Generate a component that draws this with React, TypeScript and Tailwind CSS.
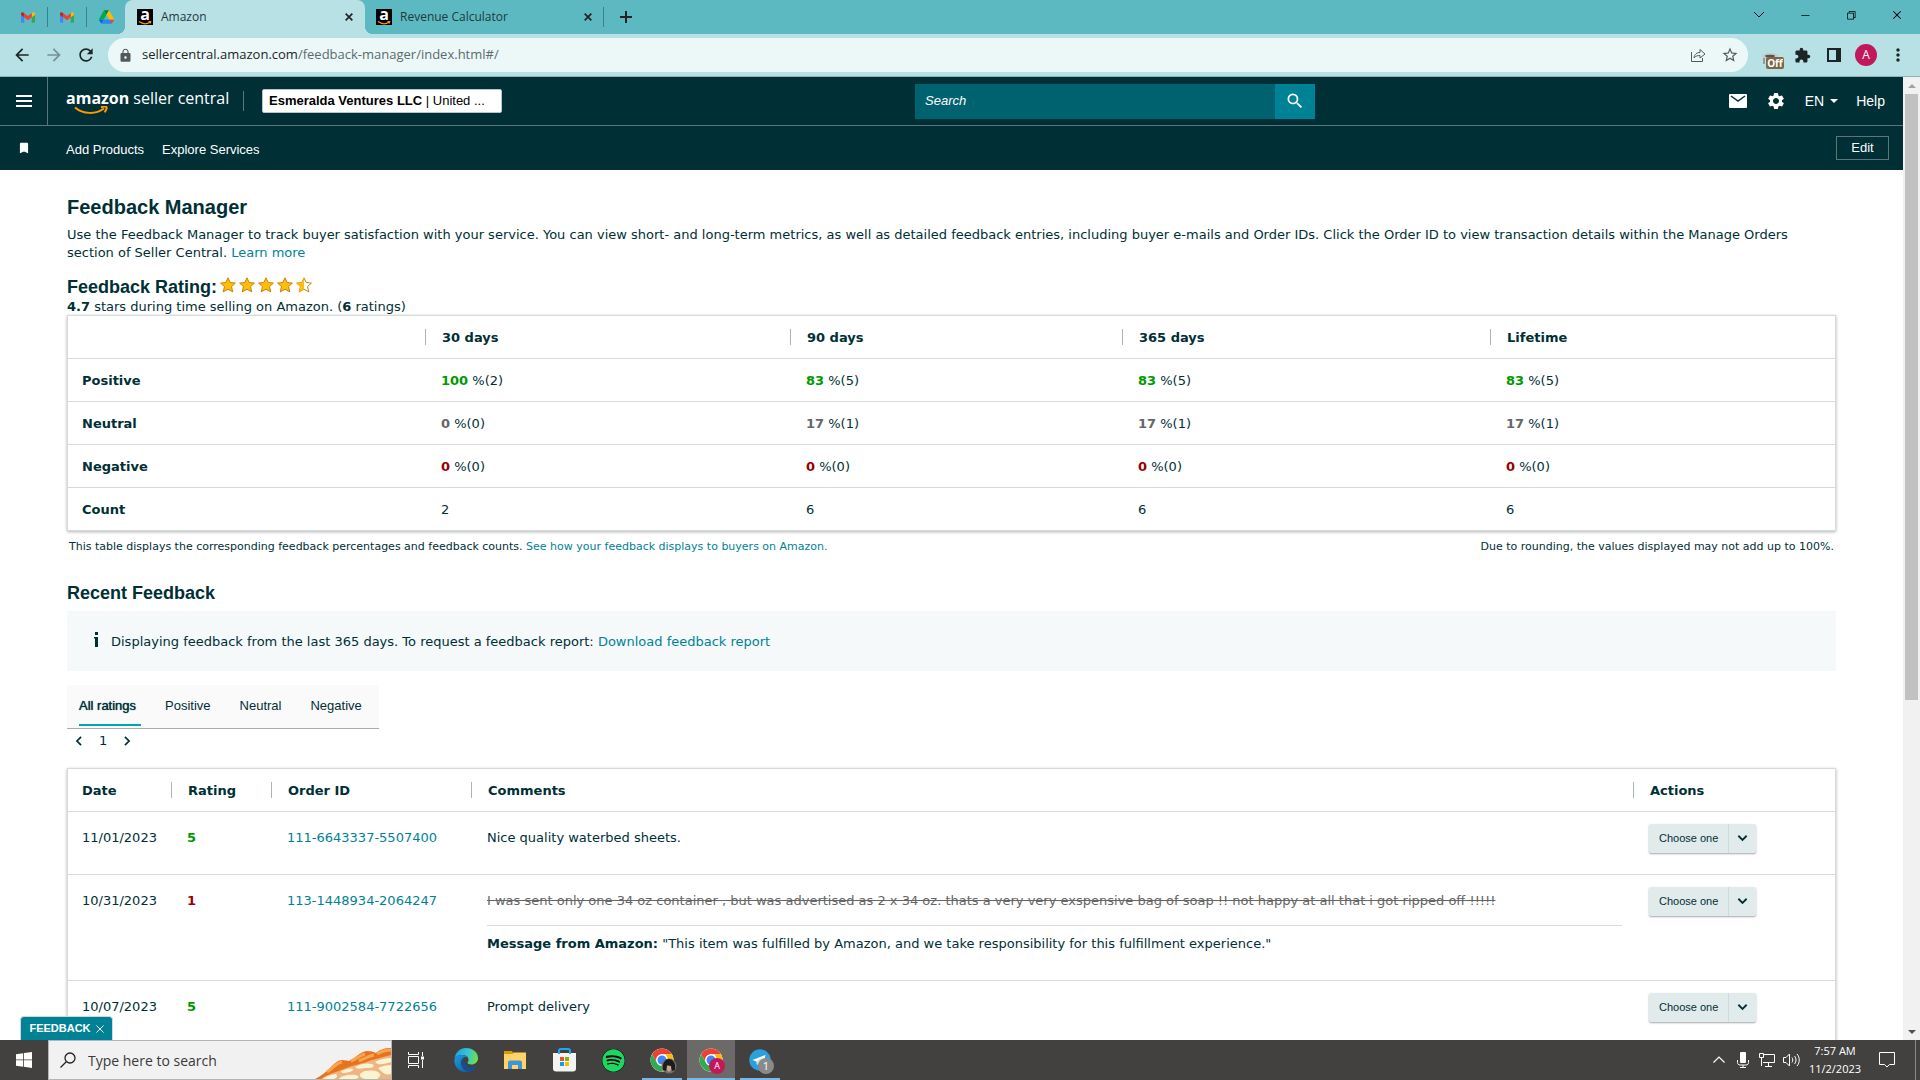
import type { ReactNode } from 'react';
import { FaSpotify } from 'react-icons/fa';
import {
  MdArrowBack,
  MdArrowForward,
  MdBookmark,
  MdExtension,
  MdLock,
  MdMoreVert,
  MdRefresh,
  MdSearch,
  MdSettings,
  MdStarBorder,
} from 'react-icons/md';
import { VscChromeClose, VscChromeMinimize, VscChromeRestore } from 'react-icons/vsc';

const UI_FONT = "font-['Open_Sans','Noto_Sans',sans-serif]";
const ARIAL = "font-['Liberation_Sans',Arial,sans-serif]";
const VERDANA = "font-['DejaVu_Sans',Verdana,sans-serif]";

interface Score {
  percent: number;
  count: number;
}

const periods = ['30 days', '90 days', '365 days', 'Lifetime'];

const summary: { label: string; color: string; scores: Score[] }[] = [
  {
    label: 'Positive',
    color: 'text-[#009900]',
    scores: [
      { percent: 100, count: 2 },
      { percent: 83, count: 5 },
      { percent: 83, count: 5 },
      { percent: 83, count: 5 },
    ],
  },
  {
    label: 'Neutral',
    color: 'text-[#666666]',
    scores: [
      { percent: 0, count: 0 },
      { percent: 17, count: 1 },
      { percent: 17, count: 1 },
      { percent: 17, count: 1 },
    ],
  },
  {
    label: 'Negative',
    color: 'text-[#990000]',
    scores: [
      { percent: 0, count: 0 },
      { percent: 0, count: 0 },
      { percent: 0, count: 0 },
      { percent: 0, count: 0 },
    ],
  },
];

const counts = [2, 6, 6, 6];

interface Feedback {
  date: string;
  rating: number;
  orderId: string;
  comment: string;
  message?: string;
}

const feedback: Feedback[] = [
  { date: '11/01/2023', rating: 5, orderId: '111-6643337-5507400', comment: 'Nice quality waterbed sheets.' },
  {
    date: '10/31/2023',
    rating: 1,
    orderId: '113-1448934-2064247',
    comment:
      'I was sent only one 34 oz container , but was advertised as 2 x 34 oz. thats a very very exspensive bag of soap !! not happy at all that i got ripped off !!!!!',
    message: '"This item was fulfilled by Amazon, and we take responsibility for this fulfillment experience."',
  },
  { date: '10/07/2023', rating: 5, orderId: '111-9002584-7722656', comment: 'Prompt delivery' },
];

const GmailIcon = () => (
  <svg viewBox="0 0 24 18" className="w-[14px] h-[11px]">
    <path d="M0 2v14.4A1.6 1.6 0 0 0 1.6 18H5.5V8.5z" fill="#4285f4" />
    <path d="M24 2v14.4A1.6 1.6 0 0 1 22.4 18H18.5V8.5z" fill="#34a853" />
    <path d="M18.5 1.6V8.6L24 4.5V2.4C24 .3 21.600-.8 20 .5z" fill="#fbbc04" />
    <path d="M5.5 8.6V1.6L12 6.5l6.5-4.9v7L12 13.5z" fill="#ea4335" />
    <path d="M0 2.4v2.100l5.5 4.100v-7L4 .5C2.400-.8 0 .3 0 2.400z" fill="#c5221f" />
  </svg>
);

const DriveIcon = () => (
  <svg viewBox="0 0 87 78" className="w-[15px] h-[14px]">
    <path d="M7 67l4 6.500c.8 1.400 2 2.500 3.300 3.300L28 53H0c0 1.500.4 3 1.200 4.500z" fill="#0066da" />
    <path d="M43.600 25L29.900 1.200c-1.300.8-2.500 1.900-3.300 3.300l-25.400 44A9 9 0 0 0 0 53h27.500z" fill="#00ac47" />
    <path d="M73.600 76.800c1.300-.8 2.500-1.900 3.300-3.300l1.600-2.800L86.100 57.500c.8-1.400 1.200-3 1.200-4.500H59.800l5.900 11.500z" fill="#ea4335" />
    <path d="M43.600 25L57.400 1.200C56 .4 54.500 0 52.900 0H34.400c-1.600 0-3.200.4-4.500 1.200z" fill="#00832d" />
    <path d="M59.800 53H27.500L13.800 76.800c1.300.8 2.900 1.200 4.500 1.200h50.800c1.600 0 3.200-.4 4.500-1.200z" fill="#2684fc" />
    <path d="M73.400 26.500L60.700 4.500c-.8-1.400-2-2.500-3.300-3.300L43.600 25l16.200 28h27.500c0-1.500-.4-3.100-1.200-4.500z" fill="#ffba00" />
  </svg>
);

const AmazonFavicon = () => (
  <span className="flex flex-col items-center w-4 h-4 bg-black">
    <span className="h-3 text-[16px] leading-[10px] font-bold text-white font-['Open_Sans',sans-serif]">a</span>
    <svg viewBox="0 0 14 4" className="w-[14px] h-1">
      <path d="M1 .5c3.500 2.600 8 2.600 11 .8M10.500.5h2.200l-.6 2" fill="none" stroke="#f90" strokeWidth="1.200" />
    </svg>
  </span>
);

const ChromeLogo = () => (
  <svg viewBox="0 0 48 48" className="w-6 h-6">
    <circle cx="24" cy="24" r="23" fill="#fff" />
    <path d="M4.100 12.500A23 23 0 0 1 43.900 12.500H24A11.500 11.500 0 0 0 14 29.700z" fill="#ea4335" />
    <path d="M43.900 12.500A23 23 0 0 1 24 47l10-17.300a11.500 11.500 0 0 0 0-11.500l-3-5.700z" fill="#fbbc04" />
    <path d="M24 47A23 23 0 0 1 4.100 12.500L14 29.700a11.500 11.500 0 0 0 20 0z" fill="#34a853" />
    <circle cx="24" cy="24" r="11.500" fill="#fff" />
    <circle cx="24" cy="24" r="9" fill="#4285f4" />
  </svg>
);

const EdgeLogo = () => (
  <svg viewBox="0 0 48 48" className="w-6 h-6">
    <defs>
      <linearGradient id="edge-top" x1="0" y1="0.3" x2="1" y2="0.5">
        <stop offset="0" stopColor="#1f9fdc" />
        <stop offset="0.5" stopColor="#35c1d8" />
        <stop offset="1" stopColor="#6fe04e" />
      </linearGradient>
      <linearGradient id="edge-low" x1="0" y1="0" x2="1" y2="1">
        <stop offset="0" stopColor="#1b9de2" />
        <stop offset="1" stopColor="#0c59a4" />
      </linearGradient>
    </defs>
    <path d="M1 22C2 9 12 0 24 0c14 0 24 9 24 20 0 8-6 13-13 13-5 0-8-2-8-3.500 0-1 2-2 2-6C29 18 24 14 17 14 8 14 2 18 1 22z" fill="url(#edge-top)" />
    <path d="M1 22c2-5 8-8 16-8 5 0 9 2 11 5-6-3-14 1-14 10 0 10 8 18 18 18-3 1-5 1-8 1C10 48-1 36 1 22z" fill="url(#edge-low)" />
    <path d="M20 21c-4 3-5 7-4 12 2 8 9 14 17 14 5-2 9-5 12-9 .6-1-.2-2-1.200-1.400C33 42 19 36 20 21z" fill="#124f93" />
  </svg>
);

const FolderIcon = () => (
  <svg viewBox="0 0 44 40" className="w-[22px] h-5">
    <path d="M0 2h15l5 4h22v8H0z" fill="#d99a10" />
    <path d="M0 8h17l3-3h24v33H0z" fill="#ffd366" />
    <path d="M8 38V25a4 4 0 0 1 4-4h20a4 4 0 0 1 4 4v13h-8v-8H16v8z" fill="#3a96dd" />
  </svg>
);

const StoreIcon = () => (
  <svg viewBox="0 0 46 48" className="w-[23px] h-6">
    <path d="M12 12V6a4 4 0 0 1 4-4h14a4 4 0 0 1 4 4v6" fill="none" stroke="#22a7f0" strokeWidth="4" />
    <path d="M0 10h46v31a6 6 0 0 1-6 6H6a6 6 0 0 1-6-6z" fill="#f3f3f3" />
    <path d="M12 7v5M34 7v5" stroke="#22a7f0" strokeWidth="4" />
    <path d="M14 18h8v8h-8z" fill="#f25022" />
    <path d="M24 18h8v8h-8z" fill="#7fba00" />
    <path d="M14 28h8v8h-8z" fill="#00a4ef" />
    <path d="M24 28h8v8h-8z" fill="#ffb900" />
  </svg>
);

const TelegramIcon = () => (
  <svg viewBox="0 0 44 44" className="w-[22px] h-[22px]">
    <circle cx="22" cy="22" r="21.5" fill="#2ba0da" />
    <path d="M7 22l26-10-5 22-8-6-4 4-1-7z" fill="#fff" />
    <path d="M15 25l14-10-9 13-4 4z" fill="#c8dcea" />
  </svg>
);

// slice of pie peeking out of the taskbar search box
const PieArt = () => (
  <svg viewBox="0 0 76 38" className="w-[76px] h-[38px]">
    <path d="M0 38C8 34 12 30 16 26c4-4 7-7 11-7 3 0 5 1 7 1 5-2 9-7 14-9 4-2 9-1 13 1 3-3 8-5 15-5v31z" fill="#e8731c" />
    <path d="M12 31c6-4 9-9 15-10M36 20c6-2 9-6 14-7M62 13c5-3 9-4 14-4M44 20c5-2 9-5 15-6" fill="none" stroke="#f7a550" strokeWidth="3" />
    <path d="M6 38c7-5 15-7 23-10 12-5 18-5 28-9 7-2 12-3 19-5v24z" fill="#eeb482" />
    <path d="M8 38c3-3 8-4 13-5 2 2 1 4-2 5zM26 30c5-2 9-3 12-2 1 2-5 4-11 4zM24 38c2-3 9-5 17-4 4 1 3 3 0 4zM40 26c6-4 13-4 17-3 3 1 2 4-3 4-6 0-12 2-14-1zM60 21c5-3 11-4 16-4v4c-6 2-13 4-16 0zM46 32c4-3 13-3 17-1 4 2 2 5-1 7H50c-4-1-7-4-4-6zM63 27c4-2 9-3 13-3v9c-4 1-7 0-9-2z" fill="#fcf3d0" />
  </svg>
);

const Star = ({ half = false }: { half?: boolean }) => (
  <svg viewBox="0 0 16 16" className="w-4 h-4">
    <path d="M8 .8l2.200 4.700 5.200.6-3.900 3.500 1.300 5.300L8 12.200l-4.800 2.700 1.300-5.300L.6 6.100l5.200-.6z" fill={half ? '#fff' : '#ffbe0a'} stroke="#c88207" />
    {half && <path d="M8 .8v11.400l-4.800 2.700 1.300-5.300L.6 6.100l5.200-.6z" fill="#ffbe0a" />}
  </svg>
);

const Chevron = ({ className, d }: { className: string; d: string }) => (
  <svg viewBox="0 0 12 12" className={className} fill="none" stroke="currentColor" strokeWidth="2">
    <path d={d} />
  </svg>
);

const TabStrip = () => (
  <div className="flex items-center h-[34px] shrink-0 bg-[#5cb8c1] text-[#1f3a3d]">
    <div className="flex items-center shrink-0 w-[125px] pl-[21px]">
      <GmailIcon />
      <span className="w-px h-5 mx-3 bg-[#3b8189]" />
      <GmailIcon />
      <span className="w-px h-5 mx-3 bg-[#3b8189]" />
      <DriveIcon />
    </div>
    <div className="relative flex items-center shrink-0 w-[240px] h-full pl-3 pr-[11px] rounded-t-lg bg-[#b8e1e5]">
      <span className="absolute -left-2 bottom-0 w-2 h-2 bg-[radial-gradient(circle_at_0_0,transparent_8px,#b8e1e5_8px)]" />
      <span className="absolute -right-2 bottom-0 w-2 h-2 bg-[radial-gradient(circle_at_100%_0,transparent_8px,#b8e1e5_8px)]" />
      <AmazonFavicon />
      <span className="flex-1 ml-2 text-[12px]">Amazon</span>
      <button aria-label="Close tab">
        <Chevron className="w-[10px] h-[10px] text-[#222]" d="M2 2l8 8M10 2l-8 8" />
      </button>
    </div>
    <div className="flex items-center shrink-0 w-[238px] pl-[11px] pr-[10px]">
      <AmazonFavicon />
      <span className="flex-1 ml-2 text-[12px]">Revenue Calculator</span>
      <button aria-label="Close tab">
        <Chevron className="w-[10px] h-[10px] text-[#222]" d="M2 2l8 8M10 2l-8 8" />
      </button>
    </div>
    <span className="w-px h-5 bg-[#3b8189]" />
    <button aria-label="New tab" className="ml-4">
      <Chevron className="w-3 h-3 text-[#222]" d="M6 0v12M0 6h12" />
    </button>
    <div className="flex items-center ml-auto mr-[17px] gap-[34px] text-black pb-1">
      <button aria-label="Search tabs">
        <svg viewBox="0 0 12 12" className="w-3 h-3" fill="none" stroke="#111">
          <path d="M1 3l5 5 5-5" />
        </svg>
      </button>
      <button aria-label="Minimize">
        <VscChromeMinimize className="w-3 h-3" />
      </button>
      <button aria-label="Restore">
        <VscChromeRestore className="w-3 h-3" />
      </button>
      <button aria-label="Close">
        <VscChromeClose className="w-3 h-3" />
      </button>
    </div>
  </div>
);

const Toolbar = () => (
  <div className="flex items-center h-[43px] shrink-0 pl-3 pr-[6px] border-b border-[#8eb3b6] bg-[#b8e1e5] text-[#1c2526]">
    <button aria-label="Back">
      <MdArrowBack className="w-5 h-5" />
    </button>
    <button aria-label="Forward" className="ml-3">
      <MdArrowForward className="w-5 h-5 text-[#769193]" />
    </button>
    <button aria-label="Reload" className="ml-3">
      <MdRefresh className="w-5 h-5" />
    </button>
    <div className="flex items-center flex-1 h-[34px] ml-3 pl-[10px] pr-[9px] rounded-full bg-[#ecf8f8]">
      <MdLock className="w-[15px] h-[15px] text-[#53595a]" />
      <span className="flex-1 ml-[9px] text-[13px] text-[#5b6b6d]">
        <span className="text-[#1c2526]">sellercentral.amazon.com</span>/feedback-manager/index.html#/
      </span>
      <button aria-label="Share">
        <svg viewBox="0 0 16 14" className="w-4 h-[14px]" fill="none" stroke="#53595a">
          <path d="M1.500 4v9.500h11V10M4 10c.5-4 3-5.500 6-5.500V1.500L15 6l-5 4V7.500C7.500 7.500 5.500 8 4 10z" />
        </svg>
      </button>
      <button aria-label="Bookmark this page" className="ml-[15px]">
        <MdStarBorder className="w-[18px] h-[18px] text-[#53595a]" />
      </button>
    </div>
    <div className="flex items-center ml-[6px]">
      <button aria-label="Extension off" className="relative w-8 h-6">
        <svg viewBox="0 0 16 12" className="w-4 h-3 mt-2 ml-2">
          <ellipse cx="8" cy="3" rx="8" ry="3" fill="#c5caca" />
          <ellipse cx="8" cy="3" rx="5" ry="1.300" fill="#555" />
          <path d="M2 5v6" stroke="#999" strokeWidth="2" />
        </svg>
        <span className="absolute left-3 top-[14px] w-[18px] h-3 rounded-[2px] bg-[#7d6747] text-center text-[10px] leading-3 font-bold text-white">
          Off
        </span>
      </button>
      <button aria-label="Extensions" className="flex justify-center w-8">
        <MdExtension className="w-[17px] h-[17px]" />
      </button>
      <button aria-label="Side panel" className="flex justify-center w-8">
        <span className="w-[14px] h-[14px] border-2 border-r-[5px] border-[#1c2526]" />
      </button>
      <button aria-label="Profile" className="flex justify-center w-8">
        <span className="w-[22px] h-[22px] rounded-full bg-[#c2185b] text-center text-[12px] leading-[22px] text-white">A</span>
      </button>
      <button aria-label="Menu" className="flex justify-center w-8">
        <MdMoreVert className="w-5 h-5" />
      </button>
    </div>
  </div>
);

const SellerHeader = () => (
  <header className={`text-white bg-[#002f36] ${ARIAL}`}>
    <div className="flex items-center h-[49px] border-b border-[#5c7579]">
      <div className="flex items-center flex-1 h-full">
        <button aria-label="Open menu" className="flex items-center justify-center w-12 h-full border-r border-[#5c7579]">
          <svg viewBox="0 0 16 12" className="w-4 h-3" fill="#fff">
            <path d="M0 0h16v2H0zM0 5h16v2H0zM0 10h16v2H0z" />
          </svg>
        </button>
        <a
          href="#home"
          className="relative flex items-baseline gap-1 w-40 ml-[18px] pb-[6px] text-[16px] leading-6 whitespace-nowrap font-['Open_Sans',sans-serif]"
        >
          <span className="font-bold">amazon</span>
          <span>seller central</span>
          <svg viewBox="0 0 34 9" className="absolute left-2 top-[20px] w-[34px] h-[9px]" fill="none" stroke="#f90" strokeWidth="2">
            <path d="M1 1.500c8 7 21 7 29 1M27 1.200c2-.6 5-.6 5.500 0s-.5 3.500-2 5" />
          </svg>
        </a>
        <span className="w-px h-5 ml-[17px] bg-[#5c7579]" />
        <button className="h-6 w-60 ml-[18px] px-[6px] rounded-[2px] border border-[#b9c4c6] bg-white text-left text-[13px] leading-[22px] text-black truncate">
          <b>Esmeralda Ventures LLC</b> | United ...
        </button>
      </div>
      <form className="flex w-[400px] h-[35px]">
        <input
          type="search"
          aria-label="Search"
          placeholder="Search"
          className="flex-1 px-[10px] bg-[#00616f] text-[13px] italic placeholder:text-white"
        />
        <button type="button" aria-label="Submit search" className="flex items-center justify-center w-10 bg-[#008296]">
          <MdSearch className="w-5 h-5" />
        </button>
      </form>
      <div className="flex items-center justify-end w-[588px] pr-[18px] text-[14px]">
        <a href="#messages" aria-label="Messages">
          <svg viewBox="0 0 18 14" className="w-[18px] h-[14px]">
            <rect width="18" height="14" rx="1" fill="#fff" />
            <path d="M2 2l7 5 7-5" fill="none" stroke="#002f36" strokeWidth="1.500" />
          </svg>
        </a>
        <a href="#settings" aria-label="Settings" className="ml-[19px]">
          <MdSettings className="w-5 h-5" />
        </a>
        <button className="flex items-center gap-[6px] ml-[19px]">
          EN
          <span className="border-x-4 border-t-4 border-x-transparent border-t-white" />
        </button>
        <a href="#help" className="ml-[18px]">Help</a>
      </div>
    </div>
    <nav className="flex items-center h-11 pr-[14px] text-[13px]">
      <MdBookmark className="w-[14px] h-[14px] ml-[17px]" />
      <a href="#add" className="ml-[35px] pt-[3px]">Add Products</a>
      <a href="#services" className="ml-[18px] pt-[3px]">Explore Services</a>
      <button className="w-[53px] h-6 ml-auto border border-[#5c7579] leading-5">Edit</button>
    </nav>
  </header>
);

const HeadCell = ({ children, className = '' }: { children?: ReactNode; className?: string }) => (
  <th scope="col" className={`h-[43px] p-0 border-b border-[#d5dbdb] text-left ${className}`}>
    <span className="flex items-center h-4 pt-[2px] pl-4 border-l border-[#aab7b8]">{children}</span>
  </th>
);

const RatingSummary = () => (
  <div className="-mt-px border border-[#d5dbdb] bg-white shadow-[0_1px_3px_rgba(0,0,0,0.3)]">
    <table className="w-full table-fixed border-separate border-spacing-0">
      <thead>
        <tr>
          <td className="w-[357px] border-b border-[#d5dbdb]" />
          <HeadCell className="w-[365px]">{periods[0]}</HeadCell>
          <HeadCell className="w-[332px]">{periods[1]}</HeadCell>
          <HeadCell className="w-[368px]">{periods[2]}</HeadCell>
          <HeadCell>{periods[3]}</HeadCell>
        </tr>
      </thead>
      <tbody>
        {summary.map((row) => (
          <tr key={row.label}>
            <th scope="row" className="h-[43px] pt-[2px] pb-0 pl-[14px] border-b border-[#d5dbdb] text-left">
              {row.label}
            </th>
            {row.scores.map((score, i) => (
              <td key={periods[i]} className="h-[43px] pt-[2px] pb-0 pl-4 border-b border-[#d5dbdb]">
                <b className={row.color}>{score.percent}</b> %({score.count})
              </td>
            ))}
          </tr>
        ))}
        <tr>
          <th scope="row" className="h-[42px] pt-[2px] pb-0 pl-[14px] text-left">Count</th>
          {counts.map((count, i) => (
            <td key={periods[i]} className="h-[42px] pt-[2px] pb-0 pl-4">{count}</td>
          ))}
        </tr>
      </tbody>
    </table>
  </div>
);

const FeedbackTable = () => (
  <div className="border border-[#d5dbdb] shadow-[0_1px_3px_rgba(0,0,0,0.3)]">
    <table className="w-full table-fixed border-separate border-spacing-0">
      <thead>
        <tr>
          <th scope="col" className="w-[103px] h-[43px] pt-[2px] pb-0 pl-[14px] border-b border-[#d5dbdb] text-left">
            Date
          </th>
          <HeadCell className="w-[100px]">Rating</HeadCell>
          <HeadCell className="w-[200px]">Order ID</HeadCell>
          <HeadCell>Comments</HeadCell>
          <HeadCell className="w-[202px]">Actions</HeadCell>
        </tr>
      </thead>
      <tbody className="align-top">
        {feedback.map((item) => (
          <tr key={item.orderId}>
            <td className="pt-[17px] pl-[14px] border-b border-[#d5dbdb]">{item.date}</td>
            <td className={`pt-[17px] pl-4 border-b border-[#d5dbdb] font-bold ${item.rating > 3 ? 'text-[#009900]' : 'text-[#990000]'}`}>
              {item.rating}
            </td>
            <td className="pt-[17px] pl-4 border-b border-[#d5dbdb]">
              <a href="#order" className="text-[#008296]">{item.orderId}</a>
            </td>
            <td className="pt-[17px] pl-4 pr-[11px] pb-[27px] border-b border-[#d5dbdb]">
              {item.message ? (
                <>
                  <p className="pb-[15px] border-b border-[#d5dbdb] text-[#666] line-through">{item.comment}</p>
                  <p className="pt-[9px]">
                    <b>Message from Amazon:</b> {item.message}
                  </p>
                </>
              ) : (
                <p>{item.comment}</p>
              )}
            </td>
            <td className="pt-3 pl-4 border-b border-[#d5dbdb]">
              <div className="relative w-[107px] h-[29px]">
                <select
                  aria-label={`Action for order ${item.orderId}`}
                  className={`w-full h-full pl-[10px] pb-px appearance-none rounded-[2px] bg-[#e2ebec] text-[11px] text-[#002f36] shadow-[0_1px_2px_rgba(0,0,0,0.35)] ${ARIAL}`}
                >
                  <option>Choose one</option>
                </select>
                <span className="absolute right-0 top-0 flex items-center justify-center w-7 h-full border-l border-[#cfdadb] pointer-events-none">
                  <Chevron className="w-[11px] h-[11px]" d="M1.500 3L6 7.500 10.500 3" />
                </span>
              </div>
            </td>
          </tr>
        ))}
      </tbody>
    </table>
  </div>
);

const FeedbackManager = () => (
  <main className={`px-[67px] pt-[23px] text-[13px] leading-[18px] text-[#002f36] ${VERDANA}`}>
    <h1 className={`text-[20px] leading-7 font-bold ${ARIAL}`}>Feedback Manager</h1>
    <p className="mt-[5px]">
      Use the Feedback Manager to track buyer satisfaction with your service. You can view short- and long-term metrics, as
      well as detailed feedback entries, including buyer e-mails and Order IDs. Click the Order ID to view transaction
      details within the Manage Orders section of Seller Central.{' '}
      <a href="#learn" className="text-[#008296]">Learn more</a>
    </p>
    <div className="flex items-start gap-[3px] h-[23px] mt-[13px]">
      <h2 className={`text-[18px] leading-6 font-bold ${ARIAL}`}>Feedback Rating:</h2>
      <div className="flex gap-[3px] pt-[2px]" role="img" aria-label="4.7 out of 5 stars">
        <Star />
        <Star />
        <Star />
        <Star />
        <Star half />
      </div>
    </div>
    <p>
      <b>4.7</b> stars during time selling on Amazon. (<b>6</b> ratings)
    </p>
    <RatingSummary />
    <div className="flex justify-between mt-2 px-[2px] text-[11px] leading-4">
      <p>
        This table displays the corresponding feedback percentages and feedback counts.{' '}
        <a href="#display" className="text-[#008296]">See how your feedback displays to buyers on Amazon.</a>
      </p>
      <p>Due to rounding, the values displayed may not add up to 100%.</p>
    </div>

    <h2 className={`mt-[26px] text-[18px] leading-6 font-bold ${ARIAL}`}>Recent Feedback</h2>
    <div className="flex items-center h-[60px] mt-[6px] pl-[27px] bg-[#f5f9fa]">
      <svg viewBox="0 0 5 15" className="w-[5px] h-[15px] mr-3 mb-1" fill="#002f36">
        <path d="M1 0h3v3H1zM0 5h4v10H1V6.500H0z" />
      </svg>
      <p className="pt-[2px]">
        Displaying feedback from the last 365 days. To request a feedback report:{' '}
        <a href="#download" className="text-[#008296]">Download feedback report</a>
      </p>
    </div>

    <div className={`flex w-[312px] h-11 mt-[14px] pl-3 border-b border-[#a6adae] bg-[#fafafa] ${ARIAL}`}>
      <button className="w-[62px] h-[41px] mr-6 pt-[2px] border-b-2 border-[#00a4b4] text-left [text-shadow:0_0_1px_#002f36]">
        All ratings
      </button>
      <button className="h-[42px] mr-[29px]">Positive</button>
      <button className="h-[42px] mr-[29px]">Neutral</button>
      <button className="h-[42px]">Negative</button>
    </div>
    <div className="flex items-center h-6 pl-[7px] gap-[15px]">
      <button aria-label="Previous page">
        <Chevron className="w-[10px] h-[10px]" d="M8.500 1L3.500 6l5 5" />
      </button>
      <span>1</span>
      <button aria-label="Next page">
        <Chevron className="w-[10px] h-[10px]" d="M3.500 1l5 5-5 5" />
      </button>
    </div>
    <div className="mt-[15px]">
      <FeedbackTable />
    </div>
  </main>
);

const Scrollbar = () => (
  <div className="flex flex-col items-center w-[17px] shrink-0 bg-[#f1f1f1]">
    <span className="flex items-center justify-center h-[17px] shrink-0">
      <span className="border-x-4 border-b-4 border-x-transparent border-b-[#a3a3a3]" />
    </span>
    <span className="w-[13px] h-[606px] shrink-0 bg-[#c1c1c1]" />
    <span className="flex items-center justify-center h-[17px] shrink-0 mt-auto">
      <span className="border-x-4 border-t-4 border-x-transparent border-t-[#505050]" />
    </span>
  </div>
);

const TaskbarApp = ({ label, state, children }: { label: string; state?: 'open' | 'active'; children: ReactNode }) => (
  <button
    aria-label={label}
    className={`relative flex items-center justify-center w-12 h-full ${state === 'active' ? 'bg-[#6c6a69]' : ''}`}
  >
    {children}
    {state && (
      <span className={`absolute bottom-0 h-[2px] bg-[#76b9ed] ${state === 'active' ? 'inset-x-0' : 'inset-x-1'}`} />
    )}
  </button>
);

const Taskbar = () => (
  <footer className="flex h-10 shrink-0 bg-[#43413f] text-white">
    <button aria-label="Start" className="flex items-center justify-center w-12">
      <svg viewBox="0 0 16 16" className="w-4 h-4" fill="#fff">
        <path d="M0 2.200L7.200 1.200v6.300H0zM8 1.100L16 0v7.500H8zM0 8.300h7.200v6.400L0 13.700zM8 8.300h8V16l-8-1.200z" />
      </svg>
    </button>
    <div className="relative flex items-center w-[344px] border border-[#b5b5b5] bg-[#f1f1f1] text-[#2b2b2b]">
      <svg viewBox="0 0 16 16" className="w-4 h-4 ml-[11px]" fill="none" stroke="#222" strokeWidth="1.300">
        <circle cx="10" cy="6" r="5" />
        <path d="M6.500 9.500L.5 15.500" />
      </svg>
      <input
        aria-label="Windows search"
        placeholder="Type here to search"
        className="flex-1 ml-3 text-[14px] placeholder:text-[#3a3a3a]"
      />
      <span className="absolute right-0 bottom-0">
        <PieArt />
      </span>
    </div>
    <TaskbarApp label="Task view">
      <svg viewBox="0 0 16 16" className="w-4 h-4" fill="none" stroke="#fff">
        <path d="M.5 0v2.500h10V0M.5 16v-2.500h10V16M.5 4.500h10v7H.5zM14.500 0v4M14.500 8v8" />
        <path d="M13 4.500h3v3h-3z" fill="#fff" stroke="none" />
      </svg>
    </TaskbarApp>
    <div className="flex gap-px ml-[2px]">
      <TaskbarApp label="Edge">
        <EdgeLogo />
      </TaskbarApp>
      <TaskbarApp label="File Explorer">
        <FolderIcon />
      </TaskbarApp>
      <TaskbarApp label="Microsoft Store">
        <StoreIcon />
      </TaskbarApp>
      <TaskbarApp label="Spotify">
        <span className="rounded-full bg-black">
          <FaSpotify className="w-[23px] h-[23px] text-[#1ed760]" />
        </span>
      </TaskbarApp>
      <TaskbarApp label="Chrome" state="open">
        <ChromeLogo />
        <svg viewBox="0 0 16 16" className="absolute left-[23px] top-[18px] w-4 h-4">
          <circle cx="8" cy="8" r="7.500" fill="#77716e" />
          <path d="M2 12C1 5 4 1 8 1s7 4 6 11l-3 1-1-5-4-1-1 6z" fill="#1e1b1b" />
          <path d="M6 8h4v4l-2 2-2-2z" fill="#c9a59a" />
        </svg>
      </TaskbarApp>
      <TaskbarApp label="Chrome profile A" state="active">
        <ChromeLogo />
        <span className="absolute left-[22px] top-[18px] w-4 h-4 rounded-full bg-[#c2185b] text-center text-[9px] leading-4">A</span>
      </TaskbarApp>
      <TaskbarApp label="Telegram" state="open">
        <TelegramIcon />
        <span className="absolute left-[22px] top-[18px] w-4 h-4 rounded-full bg-[#8a8a8a] text-center text-[11px] leading-4">1</span>
      </TaskbarApp>
    </div>
    <div className="flex items-center ml-auto">
      <svg viewBox="0 0 12 12" className="w-3 h-3" fill="none" stroke="#fff" strokeWidth="1.200">
        <path d="M.5 8.500L6 3l5.500 5.500" />
      </svg>
      <svg viewBox="0 0 12 16" className="w-3 h-4 ml-3" fill="none" stroke="#fff">
        <rect x="3" y="0" width="6" height="11" rx="1" fill="#fff" stroke="none" />
        <path d="M.5 8v2.500c0 1.500 1 2.500 2.500 2.500h6c1.500 0 2.500-1 2.500-2.500V8M6 13v2.500M3 15.500h6" />
      </svg>
      <svg viewBox="0 0 16 14" className="w-4 h-[14px] ml-[10px]" fill="none" stroke="#fff">
        <path d="M5 1.500h10.500v8H4M9.500 10v3M6 13.500h7M.5.500h4v4h-4zM2.500 4.500v8.500" />
      </svg>
      <svg viewBox="0 0 17 14" className="w-[17px] h-[14px] ml-2" fill="none" stroke="#fff">
        <path d="M.5 4.500h2.500L6.500 1v12L3 9.500H.5zM9 4.500c1 1.500 1 3.500 0 5M11.500 3c2 2.500 2 5.500 0 8M14 1c3 3.500 3 8.500 0 12" />
      </svg>
      <div className="w-[54px] ml-2 text-center text-[11px] leading-[18px] whitespace-nowrap">
        <div>7:57 AM</div>
        <div>11/2/2023</div>
      </div>
      <svg viewBox="0 0 16 16" className="w-4 h-4 ml-[17px]" fill="none" stroke="#fff">
        <path d="M.5.500h15v12h-5L8 15l-2.500-2.500h-5z" />
      </svg>
      <span className="w-px h-full ml-[20px] mr-1 bg-[#8a8a8a]" />
    </div>
  </footer>
);

const App = () => {
  return (
    <div className={`flex flex-col h-screen overflow-hidden bg-white ${UI_FONT}`}>
      <TabStrip />
      <Toolbar />
      <div className="relative flex flex-1 min-h-0">
        <div className="flex-1 min-w-0 overflow-hidden">
          <SellerHeader />
          <FeedbackManager />
        </div>
        <Scrollbar />
        <button
          className={`absolute left-5 bottom-0 flex items-center justify-center gap-[5px] w-[93px] h-6 rounded-t border border-b-0 border-[#cfd8da] bg-[#008296] text-[11px] font-bold text-white ${ARIAL}`}
        >
          FEEDBACK
          <svg viewBox="0 0 8 8" className="w-2 h-2" stroke="#fff">
            <path d="M.5.500l7 7M7.500.500l-7 7" />
          </svg>
        </button>
      </div>
      <Taskbar />
    </div>
  );
};

export default App;
